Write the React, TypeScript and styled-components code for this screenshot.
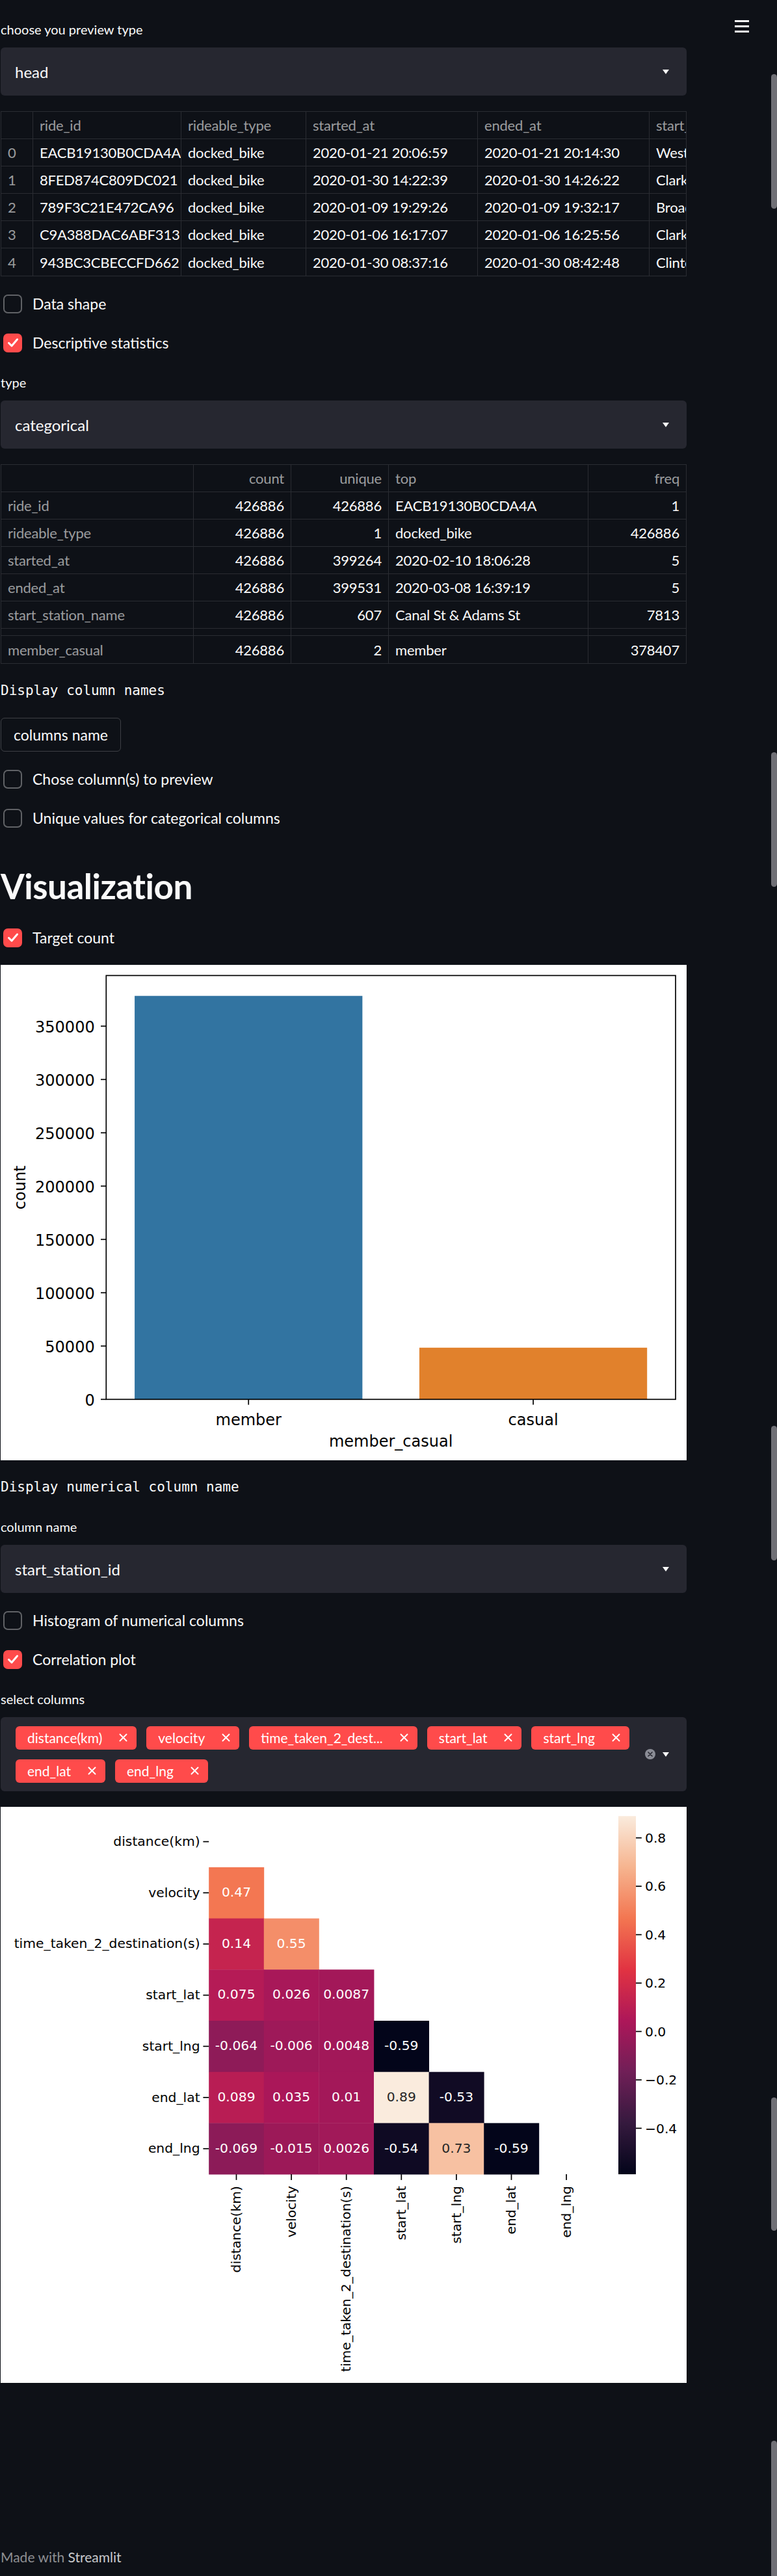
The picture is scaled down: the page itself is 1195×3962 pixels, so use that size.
import React from "react";
import styled, { createGlobalStyle } from "styled-components";

const BG = "#0e1117";
const TEXT = "#fafafa";
const MUTED = "rgba(250,250,250,0.6)";
const LINE = "rgba(250,250,250,0.12)";
const WIDGET = "#262730";
const RED = "#ff4b4b";
const UI_FONT = `"Lato", "Noto Sans", sans-serif`;
const MONO = `"DejaVu Sans Mono", "Liberation Mono", monospace`;
const PLOT = `"DejaVu Sans", sans-serif`;

const GlobalStyle = createGlobalStyle`
  html, body { margin: 0; padding: 0; background: ${BG}; }
  body { color: ${TEXT}; font-family: ${UI_FONT}; -webkit-font-smoothing: antialiased; }
  * { box-sizing: border-box; }
`;

const Page = styled.div`
  position: relative;
  min-height: 3962px;
  overflow: hidden;
  background: ${BG};
`;

const Main = styled.main`
  width: 1055px;
  margin-left: 1px;
  padding-top: 26px;
  display: flex;
  flex-direction: column;
  gap: 24px;
`;

const Hamburger = styled.div`
  position: absolute;
  top: 31px;
  left: 1130px;
  width: 22px;
  display: flex;
  flex-direction: column;
  gap: 5.5px;
`;

const HamburgerBar = styled.span`
  display: block;
  height: 2.5px;
  background: ${TEXT};
`;

const ScrollThumb = styled.div<{ $top: number; $h: number }>`
  position: absolute;
  right: 0;
  width: 9px;
  top: ${(p) => p.$top}px;
  height: ${(p) => p.$h}px;
  border-radius: 5px;
  background: #707076;
`;

/* ---------- widgets ---------- */

const Field = styled.div`
  display: flex;
  flex-direction: column;
`;

const FieldLabel = styled.div`
  font-size: 20px;
  line-height: 32px;
  padding-top: 3px;
  margin-bottom: 12px;
  color: ${TEXT};
`;

const SelectBox = styled.div`
  height: 74px;
  background: ${WIDGET};
  border-radius: 6px;
  display: flex;
  align-items: center;
  justify-content: space-between;
  padding: 0 27px 0 22px;
  font-size: 24px;
  color: ${TEXT};
`;

const CaretSvg = styled.svg`
  display: block;
  flex: none;
`;

const Caret = () => (
  <CaretSvg width="10" height="7" viewBox="0 0 10 7">
    <path d="M0 0 L10 0 L5 7 Z" fill={TEXT} />
  </CaretSvg>
);

const Select = ({ value }: { value: string }) => (
  <SelectBox>
    <span>{value}</span>
    <Caret />
  </SelectBox>
);

const CheckRow = styled.label`
  height: 36px;
  display: flex;
  align-items: center;
  gap: 16px;
  padding-left: 4px;
  font-size: 23px;
  color: ${TEXT};
`;

const CheckBox = styled.span<{ $checked: boolean }>`
  width: 29px;
  height: 29px;
  border-radius: 7px;
  flex: none;
  display: flex;
  align-items: center;
  justify-content: center;
  background: ${(p) => (p.$checked ? RED : "transparent")};
  border: ${(p) => (p.$checked ? "none" : "2.5px solid rgba(250,250,250,0.35)")};
`;

const Checkbox = ({ label, checked = false }: { label: string; checked?: boolean }) => (
  <CheckRow>
    <CheckBox $checked={checked}>
      {checked && (
        <svg width="20" height="20" viewBox="0 0 20 20">
          <path d="M3.5 10.5 L8 15 L16.5 5" fill="none" stroke="#fff" strokeWidth="3" strokeLinecap="round" strokeLinejoin="round" />
        </svg>
      )}
    </CheckBox>
    <span>{label}</span>
  </CheckRow>
);

const MonoText = styled.div`
  font-family: ${MONO};
  font-size: 21px;
  line-height: 35px;
  height: 35px;
  white-space: pre;
  color: ${TEXT};
`;

const Button = styled.button`
  align-self: flex-start;
  height: 52px;
  padding: 0 19px;
  background: transparent;
  color: ${TEXT};
  border: 1px solid rgba(250, 250, 250, 0.2);
  border-radius: 6px;
  font-family: ${UI_FONT};
  font-size: 23px;
`;

const Heading = styled.h2`
  margin: 0;
  padding: 30px 0 5px;
  font-size: 53px;
  line-height: 65px;
  font-weight: 700;
  letter-spacing: -0.5px;
  color: ${TEXT};
`;

/* ---------- tables ---------- */

const TableFrame = styled.div`
  width: 100%;
  overflow: hidden;
  border: 1px solid ${LINE};
`;

const TableRow = styled.div<{ $cols: string; $h: number }>`
  display: grid;
  grid-template-columns: ${(p) => p.$cols};
  width: max-content;
  min-width: 100%;
  height: ${(p) => p.$h}px;
  border-bottom: 1px solid ${LINE};
  &:last-child { border-bottom: none; }
`;

const Cell = styled.div<{ $right?: boolean; $muted?: boolean }>`
  display: flex;
  align-items: center;
  justify-content: ${(p) => (p.$right ? "flex-end" : "flex-start")};
  padding: 0 10px;
  border-right: 1px solid ${LINE};
  font-size: 22px;
  letter-spacing: -0.2px;
  white-space: nowrap;
  overflow: hidden;
  color: ${(p) => (p.$muted ? MUTED : TEXT)};
  &:last-child { border-right: none; }
`;

const HEAD_COLS = "49px 228px 192px 264px 264px 320px";
const headHeader = ["", "ride_id", "rideable_type", "started_at", "ended_at", "start_station_name"];
const headRows = [
  ["0", "EACB19130B0CDA4A", "docked_bike", "2020-01-21 20:06:59", "2020-01-21 20:14:30", "Western Ave & Leland Ave"],
  ["1", "8FED874C809DC021", "docked_bike", "2020-01-30 14:22:39", "2020-01-30 14:26:22", "Clark St & Montrose Ave"],
  ["2", "789F3C21E472CA96", "docked_bike", "2020-01-09 19:29:26", "2020-01-09 19:32:17", "Broadway & Belmont Ave"],
  ["3", "C9A388DAC6ABF313", "docked_bike", "2020-01-06 16:17:07", "2020-01-06 16:25:56", "Clark St & Randolph St"],
  ["4", "943BC3CBECCFD662", "docked_bike", "2020-01-30 08:37:16", "2020-01-30 08:42:48", "Clinton St & Lake St"],
];

const HeadTable = () => (
  <TableFrame>
    <TableRow $cols={HEAD_COLS} $h={42}>
      {headHeader.map((h, i) => (
        <Cell key={i} $muted>{h}</Cell>
      ))}
    </TableRow>
    {headRows.map((r) => (
      <TableRow key={r[0]} $cols={HEAD_COLS} $h={42}>
        {r.map((c, i) => (
          <Cell key={i} $muted={i === 0}>{c}</Cell>
        ))}
      </TableRow>
    ))}
  </TableFrame>
);

const STAT_COLS = "296px 150px 150px 307px 1fr";
const statRightCols = [false, true, true, false, true];
const statHeader = ["", "count", "unique", "top", "freq"];
const statRows: (string[] | null)[] = [
  ["ride_id", "426886", "426886", "EACB19130B0CDA4A", "1"],
  ["rideable_type", "426886", "1", "docked_bike", "426886"],
  ["started_at", "426886", "399264", "2020-02-10 18:06:28", "5"],
  ["ended_at", "426886", "399531", "2020-03-08 16:39:19", "5"],
  ["start_station_name", "426886", "607", "Canal St & Adams St", "7813"],
  null,
  ["member_casual", "426886", "2", "member", "378407"],
];

const StatsTable = () => (
  <TableFrame>
    <TableRow $cols={STAT_COLS} $h={42}>
      {statHeader.map((h, i) => (
        <Cell key={i} $muted $right={statRightCols[i]}>{h}</Cell>
      ))}
    </TableRow>
    {statRows.map((r, ri) =>
      r ? (
        <TableRow key={ri} $cols={STAT_COLS} $h={42}>
          {r.map((c, i) => (
            <Cell key={i} $muted={i === 0} $right={statRightCols[i]}>{c}</Cell>
          ))}
        </TableRow>
      ) : (
        <TableRow key={ri} $cols={STAT_COLS} $h={11}>
          {statHeader.map((_, i) => (
            <Cell key={i} />
          ))}
        </TableRow>
      )
    )}
  </TableFrame>
);

/* ---------- multiselect ---------- */

const MultiBox = styled.div`
  height: 114px;
  background: ${WIDGET};
  border-radius: 6px;
  display: flex;
  align-items: center;
  padding: 0 27px 0 23px;
`;

const TagArea = styled.div`
  flex: 1;
  display: flex;
  flex-direction: column;
  gap: 15px;
`;

const TagRow = styled.div`
  display: flex;
  gap: 15px;
`;

const Tag = styled.span`
  height: 36px;
  border-radius: 6px;
  background: ${RED};
  display: inline-flex;
  align-items: center;
  padding: 0 14px 0 18px;
  font-size: 21px;
  color: #fff;
  white-space: nowrap;
`;

const TagClose = styled.svg`
  margin-left: 26px;
  display: block;
`;

const Controls = styled.div`
  display: flex;
  align-items: center;
  gap: 11px;
`;

const ClearIcon = styled.span`
  width: 16px;
  height: 16px;
  border-radius: 50%;
  background: #8b8d96;
  display: flex;
  align-items: center;
  justify-content: center;
`;

const tagRows = [
  ["distance(km)", "velocity", "time_taken_2_dest...", "start_lat", "start_lng"],
  ["end_lat", "end_lng"],
];

const MultiSelect = () => (
  <MultiBox>
    <TagArea>
      {tagRows.map((row, ri) => (
        <TagRow key={ri}>
          {row.map((t) => (
            <Tag key={t}>
              {t}
              <TagClose width="13" height="13" viewBox="0 0 13 13">
                <path d="M1.5 1.5 L11.5 11.5 M11.5 1.5 L1.5 11.5" stroke="#fff" strokeWidth="2" strokeLinecap="round" />
              </TagClose>
            </Tag>
          ))}
        </TagRow>
      ))}
    </TagArea>
    <Controls>
      <ClearIcon>
        <svg width="8" height="8" viewBox="0 0 8 8">
          <path d="M1 1 L7 7 M7 1 L1 7" stroke={WIDGET} strokeWidth="1.6" strokeLinecap="round" />
        </svg>
      </ClearIcon>
      <Caret />
    </Controls>
  </MultiBox>
);

/* ---------- figures ---------- */

const Figure = styled.div<{ $h: number }>`
  width: 100%;
  height: ${(p) => p.$h}px;
  background: #fff;
`;

const PlotSvg = styled.svg`
  display: block;
  font-family: ${PLOT};
`;

const BarChart = () => {
  const W = 1055;
  const H = 762;
  const axL = 162.3, axR = 1038, axT = 16.4, axB = 668.3;
  const per = 82 / 50000;
  const unit = (axR - axL) / 2;
  const bw = unit * 0.8;
  const bars = [
    { label: "member", value: 378407, color: "#3274a1" },
    { label: "casual", value: 48479, color: "#e1812c" },
  ];
  const ticks = [0, 50000, 100000, 150000, 200000, 250000, 300000, 350000];
  return (
    <PlotSvg width={W} height={H} viewBox={`0 0 ${W} ${H}`}>
      {bars.map((b, i) => {
        const cx = axL + unit * (i + 0.5);
        const top = axB - b.value * per;
        return <rect key={b.label} x={cx - bw / 2} y={top} width={bw} height={axB - top} fill={b.color} />;
      })}
      <rect x={axL} y={axT} width={axR - axL} height={axB - axT} fill="none" stroke="#000" strokeWidth="1.7" />
      {ticks.map((t) => {
        const y = axB - t * per;
        return (
          <g key={t}>
            <line x1={axL - 8.3} x2={axL} y1={y} y2={y} stroke="#000" strokeWidth="1.7" />
            <text x={axL - 17.6} y={y + 9.5} fontSize="24" textAnchor="end" fill="#000">{t}</text>
          </g>
        );
      })}
      {bars.map((b, i) => {
        const cx = axL + unit * (i + 0.5);
        return (
          <g key={b.label}>
            <line x1={cx} x2={cx} y1={axB} y2={axB + 8.3} stroke="#000" strokeWidth="1.7" />
            <text x={cx} y={708} fontSize="24" textAnchor="middle" fill="#000">{b.label}</text>
          </g>
        );
      })}
      <text x={(axL + axR) / 2} y={741} fontSize="24" textAnchor="middle" fill="#000">member_casual</text>
      <text x={38} y={(axT + axB) / 2} fontSize="24" textAnchor="middle" fill="#000" transform={`rotate(-90 38 ${(axT + axB) / 2})`}>count</text>
    </PlotSvg>
  );
};

type RGB = [number, number, number];
const ROCKET: [number, RGB][] = [
  [0, [3, 5, 26]],
  [1 / 7, [53, 25, 62]],
  [2 / 7, [112, 31, 87]],
  [3 / 7, [173, 23, 89]],
  [4 / 7, [225, 51, 66]],
  [5 / 7, [243, 118, 81]],
  [6 / 7, [246, 180, 143]],
  [1, [250, 235, 221]],
];

const rocket = (t: number): RGB => {
  const v = Math.max(0, Math.min(1, t));
  for (let i = 0; i < ROCKET.length - 1; i++) {
    const [a, ca] = ROCKET[i];
    const [b, cb] = ROCKET[i + 1];
    if (v <= b) {
      const f = (v - a) / (b - a);
      return [0, 1, 2].map((k) => Math.round(ca[k] + (cb[k] - ca[k]) * f)) as RGB;
    }
  }
  return ROCKET[ROCKET.length - 1][1];
};

const lum = (c: RGB) => {
  const lin = c.map((x) => {
    const s = x / 255;
    return s <= 0.03928 ? s / 12.92 : Math.pow((s + 0.055) / 1.055, 2.4);
  });
  return 0.2126 * lin[0] + 0.7152 * lin[1] + 0.0722 * lin[2];
};

const heatLabels = ["distance(km)", "velocity", "time_taken_2_destination(s)", "start_lat", "start_lng", "end_lat", "end_lng"];
const heatValues: string[][] = [
  [],
  ["0.47"],
  ["0.14", "0.55"],
  ["0.075", "0.026", "0.0087"],
  ["-0.064", "-0.006", "0.0048", "-0.59"],
  ["0.089", "0.035", "0.01", "0.89", "-0.53"],
  ["-0.069", "-0.015", "0.0026", "-0.54", "0.73", "-0.59"],
];

const Heatmap = () => {
  const W = 1055;
  const H = 886;
  const left = 320.2, top = 14.2, cw = 84.6, ch = 78.7;
  const vmin = -0.59, vmax = 0.89;
  const bottom = top + ch * 7;
  const cbL = 950, cbR = 977;
  const fs = 20.3;
  const cbTicks = [0.8, 0.6, 0.4, 0.2, 0.0, -0.2, -0.4];
  const cbY = (v: number) => top + ((vmax - v) / (vmax - vmin)) * (bottom - top);
  return (
    <PlotSvg width={W} height={H} viewBox={`0 0 ${W} ${H}`}>
      <defs>
        <linearGradient id="rocketGrad" x1="0" y1="1" x2="0" y2="0">
          {ROCKET.map(([o, c]) => (
            <stop key={o} offset={o} stopColor={`rgb(${c[0]},${c[1]},${c[2]})`} />
          ))}
        </linearGradient>
      </defs>
      {heatValues.map((row, r) =>
        row.map((val, c) => {
          const col = rocket((parseFloat(val) - vmin) / (vmax - vmin));
          const x = left + c * cw;
          const y = top + r * ch;
          const dark = lum(col) > 0.408;
          return (
            <g key={`${r}-${c}`}>
              <rect x={x} y={y} width={cw + 0.4} height={ch + 0.4} fill={`rgb(${col[0]},${col[1]},${col[2]})`} />
              <text x={x + cw / 2} y={y + ch / 2 + 5.8} fontSize={fs} textAnchor="middle" fill={dark ? "#262626" : "#ffffff"}>
                {val}
              </text>
            </g>
          );
        })
      )}
      {heatLabels.map((l, i) => {
        const cy = top + ch * (i + 0.5);
        const cx = left + cw * (i + 0.5);
        return (
          <g key={l}>
            <line x1={left - 8.8} x2={left} y1={cy} y2={cy} stroke="#000" strokeWidth="1.7" />
            <text x={left - 13.6} y={cy + 6.5} fontSize={fs} textAnchor="end" fill="#000">{l}</text>
            <line x1={cx} x2={cx} y1={bottom} y2={bottom + 8.8} stroke="#000" strokeWidth="1.7" />
            <text
              x={cx + 6.7}
              y={bottom + 18}
              fontSize={fs}
              textAnchor="end"
              fill="#000"
              transform={`rotate(-90 ${cx + 6.7} ${bottom + 18})`}
            >
              {l}
            </text>
          </g>
        );
      })}
      <rect x={cbL} y={top} width={cbR - cbL} height={bottom - top} fill="url(#rocketGrad)" />
      {cbTicks.map((t) => {
        const y = cbY(t);
        const label = t < 0 ? `\u2212${Math.abs(t).toFixed(1)}` : t.toFixed(1);
        return (
          <g key={t}>
            <line x1={cbR} x2={cbR + 8.8} y1={y} y2={y} stroke="#000" strokeWidth="1.7" />
            <text x={cbR + 14} y={y + 7.3} fontSize={fs} fill="#000">{label}</text>
          </g>
        );
      })}
    </PlotSvg>
  );
};

/* ---------- footer ---------- */

const Footer = styled.footer`
  margin-top: 253px;
  padding-left: 1px;
  font-size: 21px;
  line-height: 30px;
  color: #8d8e92;
`;

const FooterBrand = styled.span`
  color: #c8c9cc;
`;

const thumbs = [
  { top: 114, h: 207 },
  { top: 1157, h: 207 },
  { top: 2193, h: 207 },
  { top: 3226, h: 205 },
  { top: 3754, h: 215 },
];

export default function App() {
  return (
    <Page>
      <GlobalStyle />
      <Main>
        <Field>
          <FieldLabel>choose you preview type</FieldLabel>
          <Select value="head" />
        </Field>
        <HeadTable />
        <Checkbox label="Data shape" />
        <Checkbox label="Descriptive statistics" checked />
        <Field>
          <FieldLabel>type</FieldLabel>
          <Select value="categorical" />
        </Field>
        <StatsTable />
        <MonoText>Display column names</MonoText>
        <Button>columns name</Button>
        <Checkbox label="Chose column(s) to preview" />
        <Checkbox label="Unique values for categorical columns" />
        <Heading>Visualization</Heading>
        <Checkbox label="Target count" checked />
        <Figure $h={762}>
          <BarChart />
        </Figure>
        <MonoText>Display numerical column name</MonoText>
        <Field>
          <FieldLabel>column name</FieldLabel>
          <Select value="start_station_id" />
        </Field>
        <Checkbox label="Histogram of numerical columns" />
        <Checkbox label="Correlation plot" checked />
        <Field>
          <FieldLabel>select columns</FieldLabel>
          <MultiSelect />
        </Field>
        <Figure $h={886}>
          <Heatmap />
        </Figure>
      </Main>
      <Footer>
        Made with <FooterBrand>Streamlit</FooterBrand>
      </Footer>
      <Hamburger>
        <HamburgerBar />
        <HamburgerBar />
        <HamburgerBar />
      </Hamburger>
      {thumbs.map((t) => (
        <ScrollThumb key={t.top} $top={t.top} $h={t.h} />
      ))}
    </Page>
  );
}
